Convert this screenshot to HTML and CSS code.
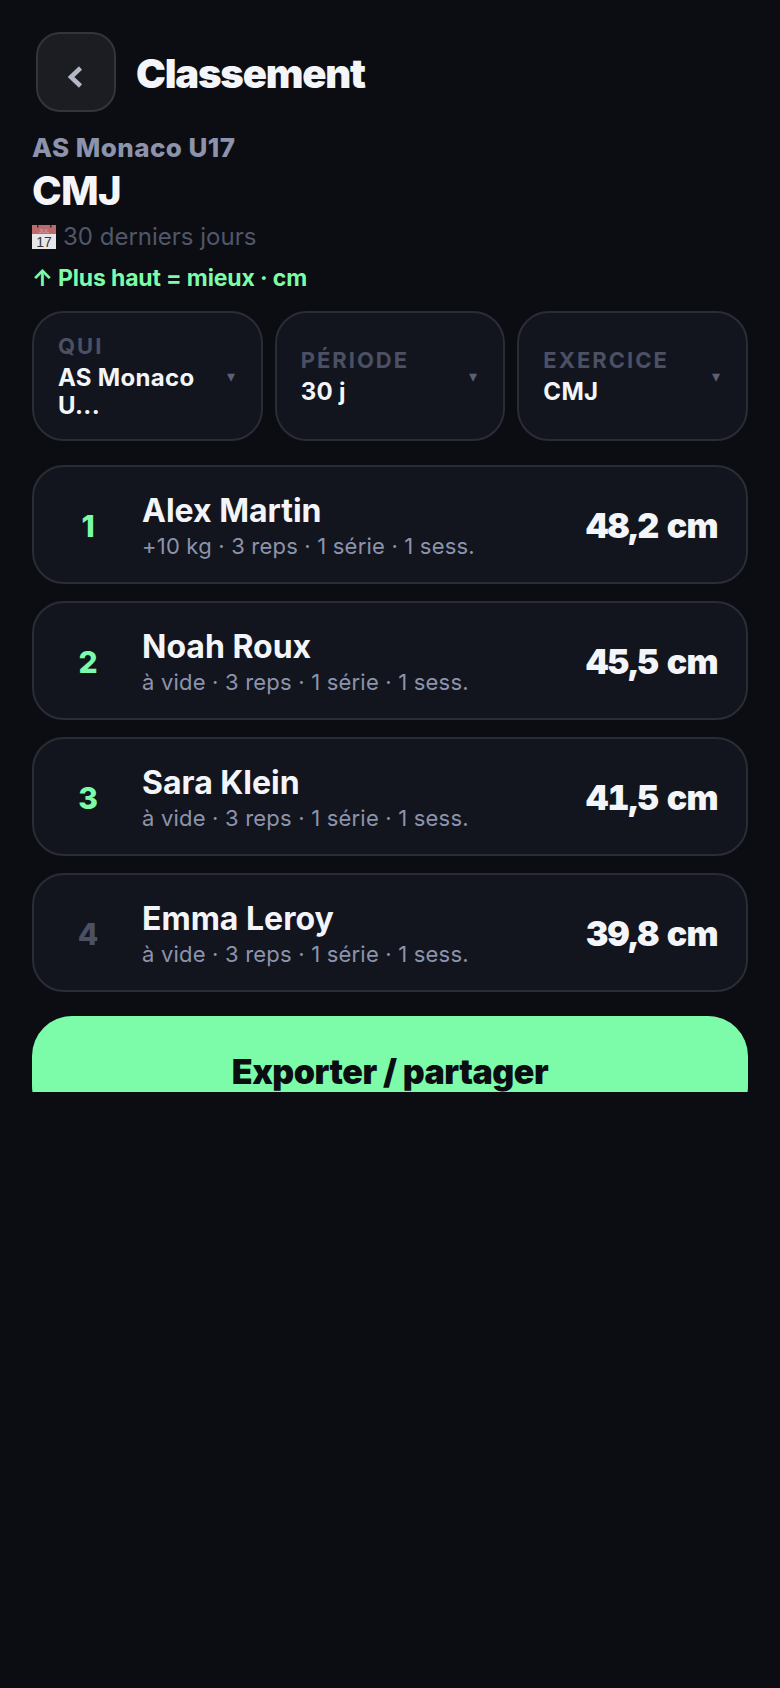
FILE: index.html
```html
<!DOCTYPE html>
<html lang="fr">
<head>
  <meta charset="UTF-8" />
  <meta name="viewport" content="width=device-width, initial-scale=1.0"/>
  <title>Classement</title>
  <link rel="stylesheet" href="styles.css">
</head>
<body>
  <div class="screen">
    <header class="topbar">
      <button type="button" class="back">
        <svg class="chevron" width="16" height="22" viewBox="0 0 16 22"><path d="M13.500 2 4 11l9.500 9" fill="none" stroke="#b4b8c6" stroke-width="4.500"/></svg>
      </button>
      <h1>Classement</h1>
    </header>

    <div class="team">AS Monaco U17</div>
    <div class="exercise">CMJ</div>
    <div class="period">
      <svg class="cal" width="24" height="24" viewBox="0 0 24 24">
        <rect width="24" height="24" fill="#e6e6e6"/>
        <rect width="24" height="9" fill="#bd6a6c"/>
        <rect x="5" y="0" width="1.500" height="2.500" fill="#3a2a2a"/>
        <rect x="18" y="0" width="1.500" height="2.500" fill="#3a2a2a"/>
        <text x="12" y="7.500" class="cal-month">JUL</text>
        <text x="12" y="22" class="cal-day">17</text>
      </svg>
      <span>30 derniers jours</span>
    </div>
    <div class="hint">↑ Plus haut = mieux · cm</div>

    <div class="filters">
      <div class="filter">
        <div class="filter-text"><span class="filter-label">QUI</span><span class="filter-value">AS Monaco U...</span></div>
        <span class="caret">▾</span>
      </div>
      <div class="filter">
        <div class="filter-text"><span class="filter-label">PÉRIODE</span><span class="filter-value">30 j</span></div>
        <span class="caret">▾</span>
      </div>
      <div class="filter">
        <div class="filter-text"><span class="filter-label">EXERCICE</span><span class="filter-value">CMJ</span></div>
        <span class="caret">▾</span>
      </div>
    </div>

    <div class="ranking">
      <div class="row">
        <div class="rank top">1</div>
        <div class="who"><div class="name">Alex Martin</div><div class="meta">+10 kg · 3 reps · 1 série · 1 sess.</div></div>
        <div class="score">48,2 cm</div>
      </div>
      <div class="row">
        <div class="rank top">2</div>
        <div class="who"><div class="name">Noah Roux</div><div class="meta">à vide · 3 reps · 1 série · 1 sess.</div></div>
        <div class="score">45,5 cm</div>
      </div>
      <div class="row">
        <div class="rank top">3</div>
        <div class="who"><div class="name">Sara Klein</div><div class="meta">à vide · 3 reps · 1 série · 1 sess.</div></div>
        <div class="score">41,5 cm</div>
      </div>
      <div class="row">
        <div class="rank">4</div>
        <div class="who"><div class="name">Emma Leroy</div><div class="meta">à vide · 3 reps · 1 série · 1 sess.</div></div>
        <div class="score">39,8 cm</div>
      </div>
    </div>

    <button type="button" class="export">Exporter / partager</button>
  </div>
</body>
</html>
```

FILE: styles.css
```css
* {
  box-sizing: border-box;
}
html, body {
  margin: 0;
  height: 100%;
  background: #0b0d12;
}
body {
  font-family: Inter, "Noto Sans", sans-serif;
  color: #f4f5f9;
  overflow: hidden;
}
.screen {
  height: 1092px;
  overflow: hidden;
  padding: 32px 32px 0;
}
.topbar {
  display: flex;
  align-items: center;
  gap: 20px;
  margin-left: 4px;
  margin-bottom: 20px;
}
.back {
  width: 80px;
  height: 80px;
  padding: 9px 0 0;
  display: flex;
  align-items: center;
  justify-content: center;
  background: #1b1d23;
  border: 2px solid #33353c;
  border-radius: 24px;
}
.chevron {
  margin-right: 2px;
}
h1 {
  margin: 4px 0 0;
  font-size: 40px;
  font-weight: 900;
  letter-spacing: -1.2px;
  line-height: 48px;
}
.team {
  font-size: 26px;
  font-weight: 800;
  letter-spacing: 0.45px;
  line-height: 32px;
  color: #8c93ab;
}
.exercise {
  font-size: 40px;
  font-weight: 800;
  letter-spacing: -0.8px;
  line-height: 48px;
  margin-top: 3px;
}
.period {
  display: flex;
  align-items: center;
  gap: 7px;
  margin-top: 6px;
  font-size: 24px;
  line-height: 32px;
  color: #515669;
}
.cal-month {
  font-family: "Liberation Sans", sans-serif;
  font-size: 6px;
  text-anchor: middle;
  fill: #d9a9aa;
}
.cal-day {
  font-family: "Liberation Sans", sans-serif;
  font-size: 14px;
  text-anchor: middle;
  fill: #333;
}
.hint {
  margin-top: 9px;
  font-size: 23px;
  font-weight: 700;
  letter-spacing: -0.15px;
  line-height: 32px;
  color: #7cfca8;
}
.filters {
  display: grid;
  grid-template-columns: repeat(3, 1fr);
  gap: 12px;
  margin-top: 17px;
}
.filter {
  display: flex;
  align-items: center;
  gap: 8px;
  height: 130px;
  padding: 0 26px 0 24px;
  background: #12151e;
  border: 2px solid #2a2d36;
  border-radius: 32px;
}
.filter-text {
  flex: 1;
  min-width: 0;
}
.filter-label {
  display: block;
  margin-bottom: 4px;
  font-size: 22px;
  font-weight: 700;
  letter-spacing: 2px;
  line-height: 28px;
  color: #4b5064;
}
.filter-value {
  display: block;
  font-size: 24px;
  font-weight: 700;
  letter-spacing: 0.3px;
  line-height: 28px;
}
.caret {
  font-size: 16px;
  color: #5b6074;
}
.ranking {
  display: flex;
  flex-direction: column;
  gap: 17px;
  margin-top: 24px;
}
.row {
  display: flex;
  align-items: center;
  height: 119px;
  padding: 2px 28px 0;
  background: #12151e;
  border: 2px solid #2a2d36;
  border-radius: 32px;
}
.rank {
  width: 80px;
  padding-right: 28px;
  text-align: center;
  font-size: 30px;
  font-weight: 800;
  color: #4b5064;
}
.rank.top {
  color: #7cfca8;
}
.who {
  flex: 1;
  padding-top: 3px;
}
.name {
  margin-top: -2px;
  font-size: 32px;
  font-weight: 700;
  line-height: 38px;
}
.meta {
  margin-top: 2px;
  font-size: 22px;
  letter-spacing: 0.2px;
  line-height: 28px;
  color: #8c93ab;
}
.score {
  font-size: 34px;
  font-weight: 900;
  letter-spacing: -0.7px;
  font-variant-numeric: tabular-nums;
}
.export {
  display: block;
  width: 100%;
  height: 110px;
  margin-top: 24px;
  padding: 0;
  border: none;
  border-radius: 40px;
  background: #7cfca8;
  color: #0b0d12;
  font-family: inherit;
  font-size: 34px;
  font-weight: 900;
  letter-spacing: -0.5px;
}
```
